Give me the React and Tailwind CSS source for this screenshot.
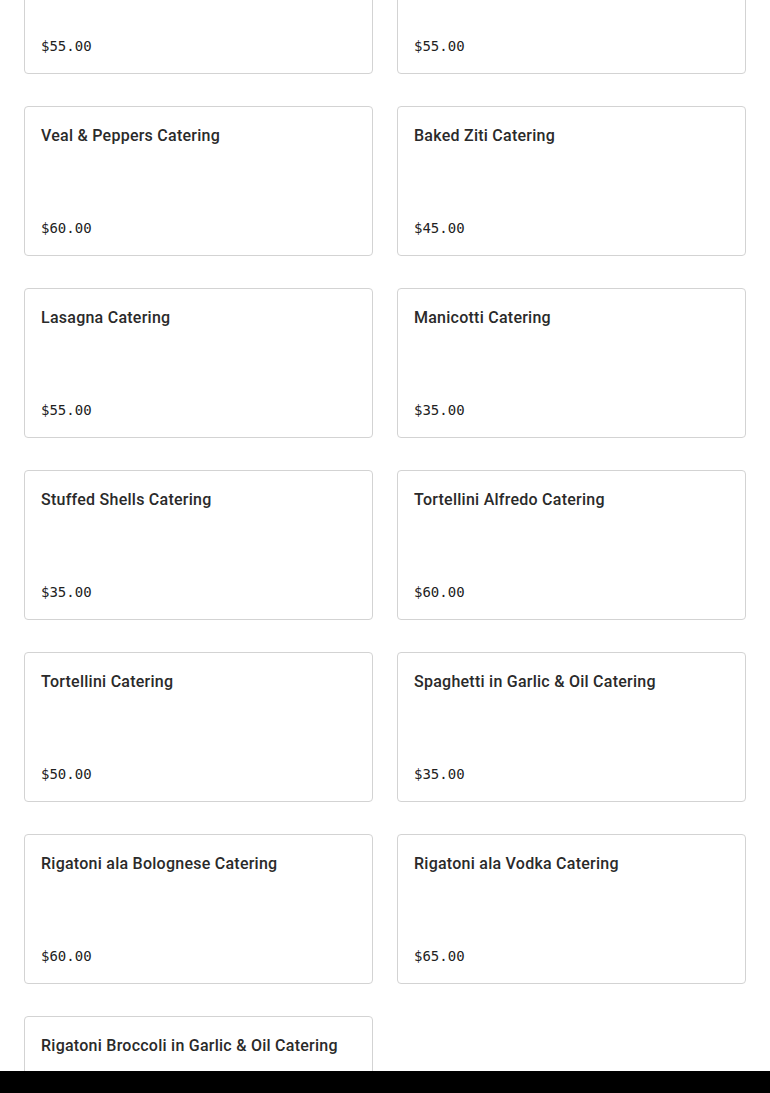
import React from 'react';

const items = [
    { name: 'Meatball Catering', price: '$55.00' },
    { name: 'Sausage & Peppers Catering', price: '$55.00' },
    { name: 'Veal & Peppers Catering', price: '$60.00' },
    { name: 'Baked Ziti Catering', price: '$45.00' },
    { name: 'Lasagna Catering', price: '$55.00' },
    { name: 'Manicotti Catering', price: '$35.00' },
    { name: 'Stuffed Shells Catering', price: '$35.00' },
    { name: 'Tortellini Alfredo Catering', price: '$60.00' },
    { name: 'Tortellini Catering', price: '$50.00' },
    { name: 'Spaghetti in Garlic & Oil Catering', price: '$35.00' },
    { name: 'Rigatoni ala Bolognese Catering', price: '$60.00' },
    { name: 'Rigatoni ala Vodka Catering', price: '$65.00' },
    { name: 'Rigatoni Broccoli in Garlic & Oil Catering', price: '$60.00' },
];

const ItemCard = ({ name, price }) => (
    <div className="h-[150px] flex flex-col justify-between border border-[#d3d3d3] rounded-[4px] bg-white px-4 pt-[17px] pb-[17px]">
        <h3 className="text-[16px] leading-6 font-medium tracking-[0.25px] text-[#2a2a2a] font-['Roboto',sans-serif]">
            {name}
        </h3>
        <p className="text-[14px] leading-5 text-[#222] font-['DejaVu_Sans_Mono',monospace]">
            {price}
        </p>
    </div>
);

export default function App() {
    return (
        <div className="min-h-screen bg-white overflow-hidden">
            <div className="px-6 -mt-[76px] grid grid-cols-2 gap-x-6 gap-y-8 pb-8">
                {items.map((item) => (
                    <ItemCard key={item.name} {...item} />
                ))}
            </div>
            {/* bottom bar */}
            <div className="fixed bottom-0 left-0 right-0 h-[22px] bg-black" />
        </div>
    );
}
